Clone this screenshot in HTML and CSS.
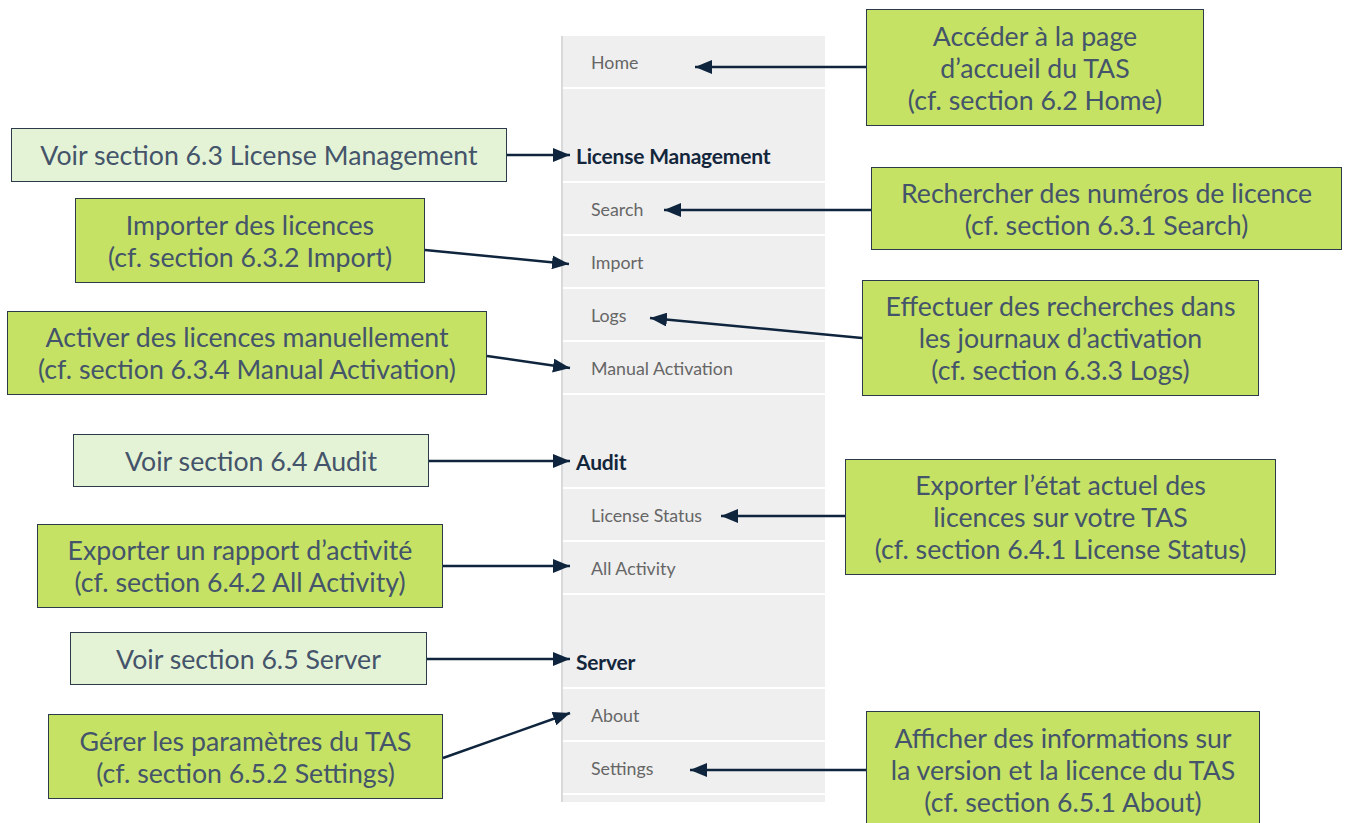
FILE: index.html
```html
<!DOCTYPE html>
<html lang="fr">
<head>
<meta charset="utf-8">
<title>TAS menu</title>
<link rel="stylesheet" href="styles.css">
</head>
<body>
<div class="canvas">
  <nav class="sidebar">
    <div class="item">Home</div>
    <div class="heading">License Management</div>
    <div class="item">Search</div>
    <div class="item">Import</div>
    <div class="item">Logs</div>
    <div class="item">Manual Activation</div>
    <div class="heading">Audit</div>
    <div class="item">License Status</div>
    <div class="item">All Activity</div>
    <div class="heading">Server</div>
    <div class="item">About</div>
    <div class="item">Settings</div>
  </nav>

  <div class="callout strong c-home">Accéder à la page<br>d’accueil du TAS<br>(cf. section 6.2 Home)</div>
  <div class="callout light c-lm">Voir section 6.3 License Management</div>
  <div class="callout strong c-search">Rechercher des numéros de licence<br>(cf. section 6.3.1 Search)</div>
  <div class="callout strong c-import">Importer des licences<br>(cf. section 6.3.2 Import)</div>
  <div class="callout strong c-logs">Effectuer des recherches dans<br>les journaux d’activation<br>(cf. section 6.3.3 Logs)</div>
  <div class="callout strong c-manual">Activer des licences manuellement<br>(cf. section 6.3.4 Manual Activation)</div>
  <div class="callout light c-audit">Voir section 6.4 Audit</div>
  <div class="callout strong c-status">Exporter l’état actuel des<br>licences sur votre TAS<br>(cf. section 6.4.1 License Status)</div>
  <div class="callout strong c-activity">Exporter un rapport d’activité<br>(cf. section 6.4.2 All Activity)</div>
  <div class="callout light c-server">Voir section 6.5 Server</div>
  <div class="callout strong c-settings">Gérer les paramètres du TAS<br>(cf. section 6.5.2 Settings)</div>
  <div class="callout strong c-about">Afficher des informations sur<br>la version et la licence du TAS<br>(cf. section 6.5.1 About)</div>

  <svg class="arrows" width="1348" height="823" viewBox="0 0 1348 823">
    <defs>
      <marker id="head" markerUnits="userSpaceOnUse" markerWidth="17" markerHeight="14" refX="17" refY="7" orient="auto">
        <path d="M0,0 L17,7 L0,14 Z" fill="#0f253d"/>
      </marker>
    </defs>
    <g stroke="#0f253d" stroke-width="2.5" fill="none" marker-end="url(#head)">
      <line x1="866" y1="67" x2="695" y2="67"/>
      <line x1="507" y1="155" x2="570" y2="155"/>
      <line x1="871" y1="210" x2="664" y2="210"/>
      <line x1="425" y1="250" x2="569" y2="264"/>
      <line x1="862" y1="338" x2="650" y2="318"/>
      <line x1="487" y1="356" x2="570" y2="368"/>
      <line x1="429" y1="461" x2="570" y2="461"/>
      <line x1="845" y1="516" x2="721" y2="516"/>
      <line x1="443" y1="566" x2="570" y2="566"/>
      <line x1="427" y1="659" x2="570" y2="659"/>
      <line x1="443" y1="758" x2="570" y2="713"/>
      <line x1="866" y1="770" x2="690" y2="770"/>
    </g>
  </svg>
</div>
</body>
</html>
```

FILE: styles.css
```css
* { box-sizing: border-box; }

html, body {
  margin: 0;
  padding: 0;
  background: #ffffff;
}

body {
  font-family: Lato, "Open Sans", "Liberation Sans", sans-serif;
  width: 1348px;
  height: 823px;
  overflow: hidden;
}

.canvas {
  position: relative;
  width: 1348px;
  height: 823px;
  padding-top: 36px;
  padding-left: 561px;
}

/* Sidebar menu */
.sidebar {
  width: 264px;
  background: #efefef;
  border-left: 2px solid #d9d9d9;
  padding-bottom: 7px;
  display: flex;
  flex-direction: column;
}

.item,
.heading {
  height: 53px;
  border-bottom: 2px solid #ffffff;
  display: flex;
  align-items: center;
}

.item {
  padding-left: 28px;
  font-size: 17.8px;
  color: #666666;
}

.heading {
  margin-top: 41px;
  padding-left: 13px;
  font-size: 21px;
  font-weight: 700;
  color: #13263b;
  letter-spacing: -0.2px;
}

/* Callout boxes (diagram nodes) */
.callout {
  position: absolute;
  display: flex;
  align-items: center;
  justify-content: center;
  text-align: center;
  font-size: 26.7px;
  line-height: 32px;
  color: #44546a;
  border: 1.5px solid #2c3b4b;
  white-space: nowrap;
}

.strong { background: #c6e264; }
.light { background: #e4f3d6; }

.c-home     { left: 866px; top: 9px;   width: 338px; height: 117px; }
.c-lm       { left: 11px;  top: 128px; width: 496px; height: 54px; }
.c-search   { left: 871px; top: 167px; width: 471px; height: 83px; }
.c-import   { left: 75px;  top: 198px; width: 350px; height: 85px; }
.c-logs     { left: 862px; top: 280px; width: 397px; height: 116px; }
.c-manual   { left: 7px;   top: 311px; width: 480px; height: 84px; }
.c-audit    { left: 73px;  top: 434px; width: 356px; height: 53px; }
.c-status   { left: 845px; top: 459px; width: 431px; height: 116px; }
.c-activity { left: 37px;  top: 524px; width: 406px; height: 84px; }
.c-server   { left: 70px;  top: 632px; width: 357px; height: 53px; }
.c-settings { left: 48px;  top: 714px; width: 395px; height: 85px; }
.c-about    { left: 866px; top: 711px; width: 394px; height: 120px; padding-bottom: 3px; }

.arrows {
  position: absolute;
  left: 0;
  top: 0;
  pointer-events: none;
}
```
